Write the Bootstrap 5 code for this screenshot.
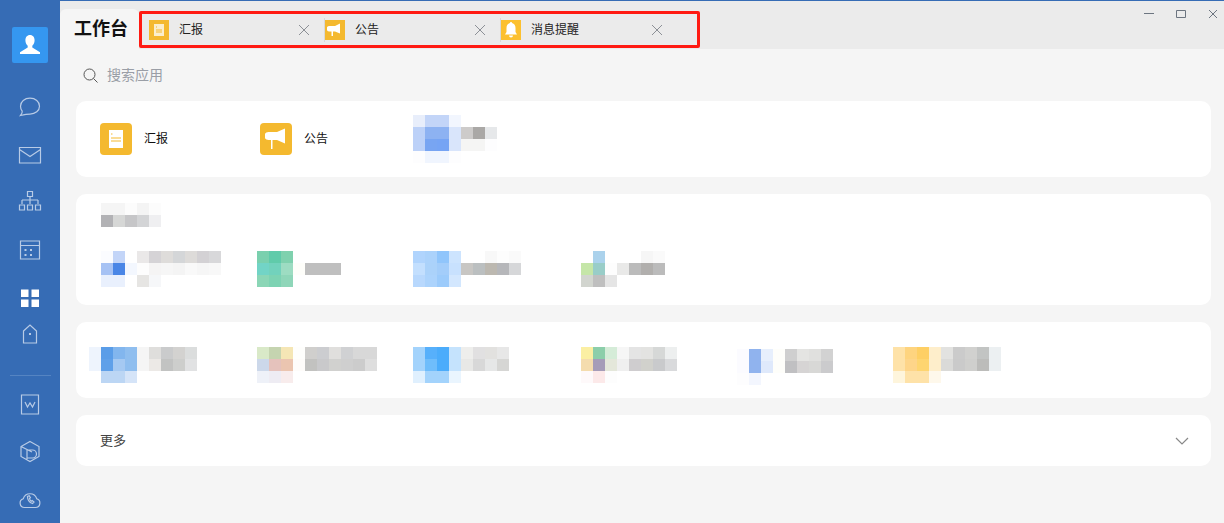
<!DOCTYPE html>
<html lang="zh-CN">
<head>
    <meta charset="UTF-8" />
    <title>工作台</title>
    <link rel="stylesheet" href="https://cdn.jsdelivr.net/npm/bootstrap@5.3.0/dist/css/bootstrap.min.css" />
    <style>
        html, body { height: 100%; }
        body { background: #f5f5f5; overflow: hidden; font-family: "Liberation Sans", "Noto Sans CJK SC", sans-serif; color: #222; }
        .app-shell { height: 523px; border-top: 1px solid #366cb5; }
        .side-rail { width: 60px; background: #366cb5; padding-top: 27px; flex-shrink: 0; margin-top: -1px; }
        .avatar-tile { width: 36px; height: 36px; background: #3597f0; border-radius: 2px; margin-bottom: 20px; }
        .rail-slot { height: 48px; }
        .rail-slot svg { fill: none; stroke: #b8cbe6; stroke-width: 1.2; }
        .rail-rule { width: 41px; height: 1px; background: #5584c2; margin: 5px 0 4px; }
        .top-strip { height: 48px; background: #ebebeb; flex-shrink: 0; }
        .home-tab { width: 79px; height: 40px; margin-top: 8px; background: #f5f5f5; border-radius: 6px 6px 0 0; font-size: 18px; font-weight: 700; color: #111; padding-left: 14px; line-height: 40px; }
        .tab-frame { width: 561px; height: 37px; margin-top: 10px; border: 3px solid #ff1a12; border-radius: 2px; padding-left: 7px; }
        .open-tab { width: 176px; height: 31px; font-size: 12px; color: #222; }
        .open-tab + .open-tab { border-left: 0; }
        .tab-glyph { width: 20px; height: 20px; background: #f4b92f; }
        .tab-glyph-bell { background: #fcc02e; }
        .tab-label { margin-left: 10px; flex: 1; }
        .tab-close { width: 12px; height: 12px; margin-right: 14px; }
        .tab-rule { width: 1px; height: 24px; background: #d8d8d8; }
        .win-buttons { position: absolute; top: 8px; right: 6px; gap: 22px; }
        .search-row { height: 52px; padding-left: 23px; font-size: 14px; color: #9a9ea6; gap: 9px; }
        .panel-list { padding: 0 13px 0 16px; gap: 17px; }
        .app-panel { border: 0; border-radius: 10px; background: #fff; padding-left: 24px; }
        .panel-short { height: 76px; }
        .panel-tall { height: 111px; padding-top: 9px; }
        .panel-more { height: 51px; padding-right: 22px; font-size: 13px; color: #444; }
        .app-slot { width: 160px; flex-shrink: 0; font-size: 12px; color: #111; gap: 12px; }
        .app-tile { width: 32px; height: 32px; background: #f4b92f; border-radius: 4px; }
        .blur-grid { display: grid; grid-auto-rows: 12px; grid-auto-columns: 12px; }
        .blur-cell { width: 12px; height: 12px; }
        .panel-row { margin-top: 24px; }
    </style>
</head>
<body>

<div class="app-shell d-flex">
    <nav class="side-rail d-flex flex-column align-items-center">
        <div class="avatar-tile d-flex align-items-center justify-content-center">
            <svg width="22" height="22" viewBox="0 0 22 22"><path fill="#fff" d="M11 1c-3 0-4.6 2.300-4.600 5.200 0 2.300 1 4.300 2.300 5.500v1.700L1 18.200V20h20v-1.800l-7.700-4.800v-1.700c1.300-1.200 2.300-3.200 2.300-5.500C15.600 3.300 14 1 11 1z"/></svg>
        </div>
        <div class="rail-slot d-flex align-items-center"><svg width="24" height="24" viewBox="0 0 24 24"><path d="M12 3.200c5.400 0 9.500 3.500 9.500 8 0 4.400-4.100 7.900-9.500 7.900-1.700 0-5 .4-9.500 1.400 1.300-1.600 2-3 1.700-4.300-.9-1.300-1.700-3-1.700-5 0-4.500 4.100-8 9.500-8z"/></svg></div>
        <div class="rail-slot d-flex align-items-center"><svg width="24" height="24" viewBox="0 0 24 24"><path d="M1.500 4.500h21v15.500h-21zM1.500 6.500l10.500 7 10.500-7"/></svg></div>
        <div class="rail-slot d-flex align-items-center"><svg width="24" height="24" viewBox="0 0 24 24"><path d="M9.500 1.500h5v5h-5zM4 10h16M4 10v4M12 6.500V14M20 10v4M1.500 15h5v5h-5zM9.500 15h5v5h-5zM17.500 15h5v5h-5z"/></svg></div>
        <div class="rail-slot d-flex align-items-center"><svg width="24" height="24" viewBox="0 0 24 24"><path d="M2.500 3h19v18h-19zM2.500 7.500h19"/><path stroke-width="2" stroke-dasharray="2 3.500" d="M6.500 12h11M6.500 17h11"/></svg></div>
        <div class="rail-slot d-flex align-items-center"><svg width="24" height="24" viewBox="0 0 24 24"><path fill="#fff" stroke="none" d="M3 3.500h7.500v7.500H3zM13.500 3.500H21v7.500h-7.500zM3 13.500h7.500V21H3zM13.500 13.500H21V21h-7.500z"/></svg></div>
        <div class="rail-slot d-flex align-items-start"><svg width="24" height="24" viewBox="0 0 24 24"><path d="M5.500 9L12 3l6.500 6v12h-13z"/><path stroke-width="2" d="M11 12h2"/></svg></div>
        <div class="rail-rule"></div>
        <div class="rail-slot d-flex align-items-center"><svg width="24" height="24" viewBox="0 0 24 24"><path d="M3.500 3h17v19h-17zM7 10l2.500 5 2.500-4 2.500 4L17 10"/></svg></div>
        <div class="rail-slot d-flex align-items-center"><svg width="24" height="24" viewBox="0 0 24 24"><path d="M12 2.500l9 5v10l-9 5-9-5v-10zM9 21v-10h5.500a3.500 3.500 0 0 1 0 8H9M3 7.500L14 13"/></svg></div>
        <div class="rail-slot d-flex align-items-center"><svg width="24" height="24" viewBox="0 0 24 24"><path d="M6.500 20.500a4.500 4.500 0 0 1-1.200-8.800 7 7 0 0 1 13.400 0 4.500 4.500 0 0 1-1.200 8.800zM9.500 9.500c0 3.500 2 6 5 7l1.500-1.500-1.800-1.500-1 .7c-.8-.6-1.500-1.700-1.700-2.700l.9-.8-1.200-2z"/></svg></div>
    </nav>

    <div class="flex-grow-1 d-flex flex-column position-relative">
        <header class="top-strip d-flex">
            <div class="home-tab">工作台</div>
            <div class="tab-frame d-flex align-items-center">
                <div class="open-tab d-flex align-items-center">
                    <div class="tab-glyph d-flex align-items-center justify-content-center">
                        <svg width="10" height="12" viewBox="0 0 10 12"><path fill="#fbeecb" d="M0 0h10v12H0z"/><path stroke="#f4b92f" d="M2 3h1M2 6h6M2 8h6"/></svg>
                    </div>
                    <span class="tab-label">汇报</span>
                    <svg class="tab-close" viewBox="0 0 12 12"><path stroke="#8c9096" d="M1 1l10 10M11 1L1 11"/></svg>
                    <div class="tab-rule"></div>
                </div>
                <div class="open-tab d-flex align-items-center">
                    <div class="tab-glyph d-flex align-items-center justify-content-center">
                        <svg width="16" height="14" viewBox="0 0 16 14"><path fill="#fff" d="M2.500 3H8l5-2.500v10L8 8.500H6V13H4.500V8.500H2.500A2.700 2.700 0 0 1 2.500 3z"/></svg>
                    </div>
                    <span class="tab-label">公告</span>
                    <svg class="tab-close" viewBox="0 0 12 12"><path stroke="#8c9096" d="M1 1l10 10M11 1L1 11"/></svg>
                    <div class="tab-rule"></div>
                </div>
                <div class="open-tab d-flex align-items-center">
                    <div class="tab-glyph tab-glyph-bell d-flex align-items-center justify-content-center">
                        <svg width="14" height="16" viewBox="0 0 14 16"><path fill="#fff" d="M7 0c.7 0 1 .5 1 1.100C10.300 1.700 11.500 3.800 11.500 6v4l1.500 2.500H1L2.500 10V6C2.500 3.800 3.700 1.700 6 1.100 6 .5 6.300 0 7 0zM5 13.500h4a2 2 0 0 1-4 0z"/></svg>
                    </div>
                    <span class="tab-label">消息提醒</span>
                    <svg class="tab-close" viewBox="0 0 12 12"><path stroke="#8c9096" d="M1 1l10 10M11 1L1 11"/></svg>
                </div>
            </div>
            <div class="win-buttons d-flex align-items-center">
                <svg width="10" height="10" viewBox="0 0 10 10"><path stroke="#6c7580" d="M0 4.500h10"/></svg>
                <svg width="10" height="10" viewBox="0 0 10 10"><path fill="none" stroke="#6c7580" d="M.5 1.500h9v7h-9z"/></svg>
                <svg width="10" height="10" viewBox="0 0 10 10"><path stroke="#6c7580" d="M1 1l8 8M9 1L1 9"/></svg>
            </div>
        </header>

        <div class="search-row d-flex align-items-center">
            <svg width="15" height="15" viewBox="0 0 15 15"><circle cx="6.500" cy="6.500" r="5.500" fill="none" stroke="#555"/><path stroke="#555" d="M10.500 10.500l4 4"/></svg>
            <span>搜索应用</span>
        </div>

        <main class="panel-list d-flex flex-column">
            <section class="card app-panel panel-short flex-row align-items-center">
                <div class="app-slot d-flex align-items-center">
                    <div class="app-tile d-flex align-items-center justify-content-center">
                        <svg width="14" height="18" viewBox="0 0 14 18"><path fill="#fff" d="M0 0h14v18H0z"/><path stroke="#f4b92f" d="M2 4h1.500M2 8h10M2 11h10"/></svg>
                    </div>
                    <span>汇报</span>
                </div>
                <div class="app-slot d-flex align-items-center">
                    <div class="app-tile d-flex align-items-center justify-content-center">
                        <svg width="22" height="22" viewBox="0 0 22 22"><path fill="#fff" d="M3.500 4H12l8-3.500v15L12 12H7.500v9H6v-9H3.500a4 4 0 0 1 0-8z"/></svg>
                    </div>
                    <span>公告</span>
                </div>
                <div class="app-slot" data-blur="apps"></div>
            </section>

            <section class="card app-panel panel-tall">
                <div data-blur="title"></div>
                <div class="panel-row d-flex">
                    <div class="app-slot" data-blur="a1"></div>
                    <div class="app-slot" data-blur="a2"></div>
                    <div class="app-slot" data-blur="a3"></div>
                    <div class="app-slot" data-blur="a4"></div>
                </div>
            </section>

            <section class="card app-panel panel-short flex-row">
                <div class="app-slot" data-blur="b1"></div>
                <div class="app-slot" data-blur="b2"></div>
                <div class="app-slot" data-blur="b3"></div>
                <div class="app-slot" data-blur="b4"></div>
                <div class="app-slot" data-blur="b5"></div>
                <div class="app-slot" data-blur="b6"></div>
            </section>

            <section class="card app-panel panel-more flex-row align-items-center justify-content-between">
                <span>更多</span>
                <svg width="14" height="8" viewBox="0 0 14 8"><path fill="none" stroke="#888" stroke-width="1.200" d="M1 1l6 6 6-6"/></svg>
            </section>
        </main>
    </div>
</div>

<script>
// pixelated placeholders: offset from the slot plus rows of cell colours
const blurs = {
    apps: { x: -7, y: 0, rows: [
        "e8eefb c3d5f8 c3d5f8 f2f6fe fff fff fff",
        "bcd1f8 8db2f2 8db2f2 d9e5fb cdcbca aaa8a6 e6e8ea",
        "bcd1f8 78a5f2 76a4f4 d9e5fb f5f5f4 f5f5f4 fdfdfe",
        "fdfdfe f0f5fe f0f5fe fdfdfe fff fff fff"] },
    title: { x: 1, y: 0, rows: [
        "f5f5f5 f5f5f5 fcfcfc f4f4f4 fcfcfc",
        "b2b2b5 d6d7d6 c6c6c8 d3d4d6 efeff1"] },
    a1: { x: 1, y: 0, rows: [
        "fbfcff c3d5f8 fff eae8e8 d5d3d6 dedcda d4d6d8 dddbd9 d3d1d4 d8d8da",
        "a6c2f4 4a86e6 f3f7fe fdfdfd f5f4f4 f6f6f6 f4f4f4 f9f9f9 f6f6f6 f8f8f8",
        "e9f0fd e9f0fd fff e6e5e3 f6f7f9 fff fff fff fff fff"] },
    a2: { x: -3, y: 0, rows: [
        "7ad0ae 60cbaa 7fd1ae fff fff fff fff",
        "72d4c6 72d2bc 9ddcc2 fefefa bfbfbf bfbfbf bfbfbf",
        "8bd6b6 7dd3b3 8fd6b9 fff fff fff fff"] },
    a3: { x: -7, y: 0, rows: [
        "b0d4fd abd2fb 90c5fb cde4fe fff fff f8f8f8 fdfdfd fafafa",
        "c3dffe abd2fa a3cdfa c8e1fe c8c6c3 bbbfc0 bcb8b0 b6b7ba d6d7d9",
        "b8d8fd acd3fc 9ccbfb d3e7fe fff fff fff fff fff"] },
    a4: { x: 1, y: 0, rows: [
        "fff abd2ec fff fff fff f6f6f6 fafafa",
        "c5e6a8 99cdc8 fdfdfd e9e9e8 bbbbbb b1afad bbbbbb",
        "d2d5cf bfbfbf e5e5e5 fff fff fff fff"] },
    b1: { x: -11, y: 25, rows: [
        "eef4fd 5a9de8 82b6ee 8fbeef f5f5f5 dfdedc cacbcc d3d2d0 dbdddd",
        "eef4fd 5fa0e9 a5c9f2 8fbeef f5f5f5 ece9e6 c2c3c2 cdcecc e1e2e3",
        "fff bcd6f4 bcd6f4 d5e4f8 fff fff fff fff fff"] },
    b2: { x: -3, y: 25, rows: [
        "d9e9c8 c5d4b0 f5e6b5 fefefc d0cfcd cccdd0 e0dfdd d0d1d3 d8d8d8 d8d8d8",
        "ccd8ea e5c2bc ebc5b0 fefcfa c2c2c0 c9c9cb d1d1cf cfcfcf cccccc dedede",
        "eef1f8 eeecf3 f8ecec fff fff fff fff fff fff fff"] },
    b3: { x: -7, y: 25, rows: [
        "a3d3fc 57b0fb 4bacfb c5e3fd eeeeec e1e0e1 e2e1df e7e7e7",
        "a3d3fc 6fbdfb 4bacfb c5e3fd e8e8e6 d8d8d8 e6e7e7 d6d6d4",
        "e0f0fe a3d3fc a3d3fc eaf5fe fff fff fff fff"] },
    b4: { x: 1, y: 25, rows: [
        "fbefa3 8cceaa d5ecd8 f6f6f6 e4e4e4 e3e3e1 d6d8d7 edefef",
        "f4dcae a59cb8 e4e7da efefef cfcdcf d1d1cc c9cacc d9dadc",
        "fef9fa fce9e9 fdfdfd fff fff fff fff fff"] },
    b5: { x: -3, y: 27, rows: [
        "fbfbff 90b3ee e7effc fefefa cfcfcf e4e4e2 e0e0de d2d2d2",
        "fbfbff 90b3ee dfe9fb fefefa c0c0c2 d6d4d4 d8d8d6 cbcbcd",
        "fdfdfe f3f6fe fff fff fff fff fff fff"] },
    b6: { x: -7, y: 25, rows: [
        "fee2a8 fed47f fecf64 feeecb e2e2e0 cbcbcb d1d1cf c2c4c3 ecf0f2",
        "fee2a8 fed589 fed570 feeecb dadad8 cacaca cfcfcd bcbcba ecf0f2",
        "fef5dc fee2a8 fee2a8 fef8eb fff fff fff fff fff"] }
};

document.querySelectorAll("[data-blur]").forEach(host => {
    const blur = blurs[host.dataset.blur];
    const grid = document.createElement("div");
    grid.className = "blur-grid";
    grid.style.marginLeft = blur.x + "px";
    grid.style.marginTop = blur.y + "px";
    blur.rows.forEach((row, r) => {
        row.split(" ").forEach((colour, c) => {
            const cell = document.createElement("div");
            cell.className = "blur-cell";
            cell.style.gridRow = r + 1;
            cell.style.gridColumn = c + 1;
            cell.style.background = "#" + colour;
            grid.appendChild(cell);
        });
    });
    host.appendChild(grid);
});
</script>
<script src="https://cdn.jsdelivr.net/npm/bootstrap@5.3.0/dist/js/bootstrap.bundle.min.js"></script>
</body>
</html>
